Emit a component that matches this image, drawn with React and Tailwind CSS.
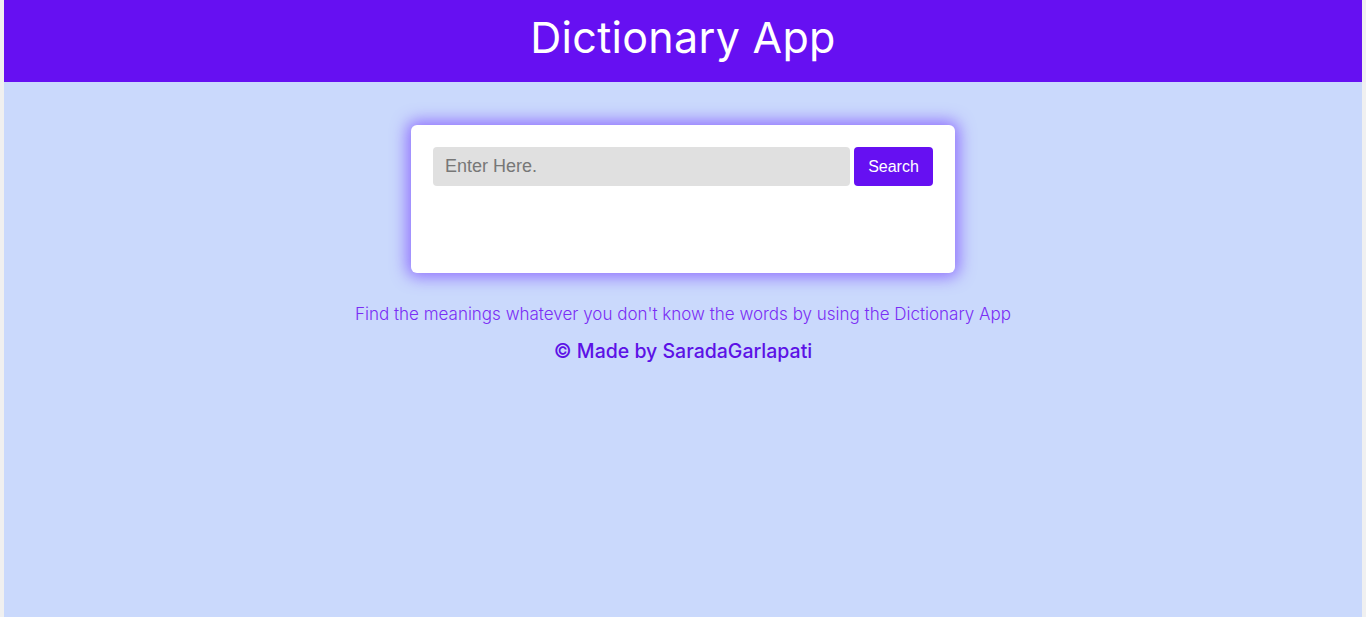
export default function App() {
  return (
    <div className="min-h-screen bg-[#f0f0f0] px-[4px]" style={{ fontFamily: "Inter, 'Open Sans', sans-serif" }}>
      <div className="min-h-screen bg-[#cad9fc]">
        {/* header */}
        <header className="flex h-[82px] items-center justify-center bg-[#6610f2] pb-[8px]">
          <h1 className="text-[43px] font-normal tracking-[0.3px] text-white">Dictionary App</h1>
        </header>

        {/* search card */}
        <div className="flex justify-center pt-[43px]">
          <div className="h-[148px] w-[544px] rounded-md bg-white p-[22px] shadow-[0_0_16px_4px_rgba(124,77,255,0.75)]">
            <div className="flex gap-[4px]">
              <input
                type="text"
                placeholder="Enter Here."
                className="h-[39px] w-[417px] rounded-[4px] bg-[#e0e0e0] px-3 text-[18px] text-[#555] outline-none placeholder:text-[#777]"
                style={{ fontFamily: "'Liberation Sans', Arial, sans-serif" }}
              />
              <button
                className="h-[39px] w-[79px] rounded-[4px] bg-[#6610f2] text-[16px] text-white"
                style={{ fontFamily: "'Liberation Sans', Arial, sans-serif" }}
              >
                Search
              </button>
            </div>
          </div>
        </div>

        {/* footer text */}
        <p className="mt-[29px] text-center text-[17px] font-light text-[#7a2ef5]">
          Find the meanings whatever you don't know the words by using the Dictionary App
        </p>
        <p className="mt-[9px] text-center text-[19.5px] font-medium text-[#5c12e6]">
          © Made by SaradaGarlapati
        </p>
      </div>
    </div>
  );
}
